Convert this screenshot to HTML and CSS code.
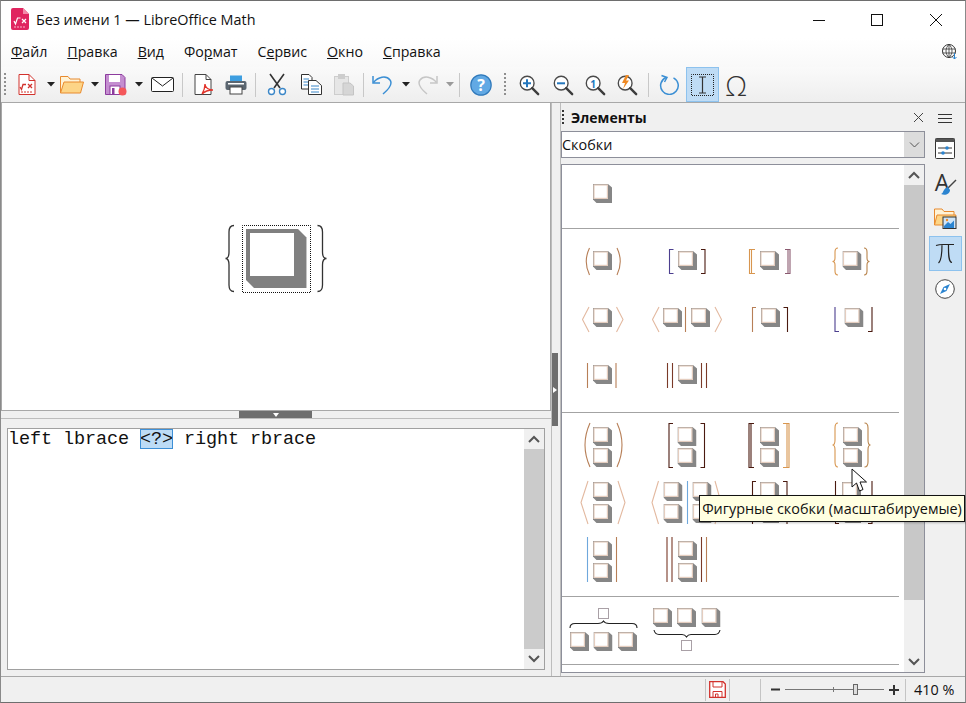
FILE: index.html
```html
<!DOCTYPE html>
<html lang="ru">
<head>
<meta charset="utf-8">
<title>Без имени 1 — LibreOffice Math</title>
<link rel="stylesheet" href="styles.css">
</head>
<body>
<svg class="defs" width="0" height="0" aria-hidden="true">
  <symbol id="b" viewBox="0 0 19 19">
    <polygon points="0,0 15,0 19,3.5 19,19 3.5,19 0,15.5" fill="#868686"/>
    <rect x="1" y="1" width="13.4" height="13.4" fill="#fff" stroke="#e4cdbf" stroke-width="1.2"/>
  </symbol>
  <symbol id="bs" viewBox="0 0 11 11">
    <rect x=".5" y=".5" width="10" height="10" fill="#fff" stroke="#a9a0a6"/>
  </symbol>
  <symbol id="dd" viewBox="0 0 8 5"><polygon points="0,0 8,0 4,4.5" fill="#222"/></symbol>
  <symbol id="ddg" viewBox="0 0 8 5"><polygon points="0,0 8,0 4,4.5" fill="#9a9a9a"/></symbol>
  <symbol id="mag" viewBox="0 0 24 24">
    <circle cx="10" cy="10" r="7.5" fill="#fff" stroke="#4a4a4a" stroke-width="1.5"/>
    <path d="M15.5 15.5L22 22" stroke="#3c3c3c" stroke-width="2.6" stroke-linecap="round"/>
  </symbol>
</svg>
<div class="window">
  <header class="titlebar">
    <svg class="app-icon" width="18" height="22" viewBox="0 0 18 22"><path d="M2 0H12L18 6V20a2 2 0 0 1-2 2H2a2 2 0 0 1-2-2V2a2 2 0 0 1 2-2z" fill="#e0255f"/><path d="M12 0L18 6H12z" fill="#f38aa8"/><path d="M3 13l1.5 3 2-6h3M11 11l4 4M15 11l-4 4" fill="none" stroke="#fff" stroke-width="1.2"/><path d="M3 19h12" stroke="#f7b5c8" stroke-dasharray="2 1"/></svg>
    <span class="title-text">Без имени 1 — LibreOffice Math</span>
    <div class="win-btns">
      <span class="win-btn"><svg width="12" height="12" viewBox="0 0 12 12"><path d="M0 6.5H12" stroke="#111"/></svg></span>
      <span class="win-btn"><svg width="12" height="12" viewBox="0 0 12 12"><rect x=".5" y=".5" width="11" height="11" fill="none" stroke="#111"/></svg></span>
      <span class="win-btn"><svg width="12" height="12" viewBox="0 0 12 12"><path d="M0 0L12 12M12 0L0 12" stroke="#111"/></svg></span>
    </div>
  </header>
  <nav class="menubar">
    <span><u>Ф</u>айл</span><span><u>П</u>равка</span><span><u>В</u>ид</span><span>Фо<u>р</u>мат</span><span>С<u>е</u>рвис</span><span><u>О</u>кно</span><span><u>С</u>правка</span>
    <svg class="globe" width="17" height="17" viewBox="0 0 17 17"><circle cx="8" cy="8" r="6.5" fill="#fff" stroke="#333"/><path d="M1.5 6H14.5M1.5 10H14.5M8 1.5V14.5M8 1.5C4 5 4 11 8 14.5M8 1.5C12 5 12 11 8 14.5" fill="none" stroke="#333" stroke-width=".8"/><path d="M13.5 10V16M11.5 14l2 2 2-2" fill="none" stroke="#2b84d0"/></svg>
  </nav>
  <div class="toolbar">
    <span class="tb w6"><i class="grip"></i></span>
    <span class="tb w38"><svg width="18" height="21" viewBox="0 0 18 21"><path d="M1 .5H11L17 6.5V20.5H1z" fill="#fff" stroke="#d2322d"/><path d="M11 .5V6.5H17" fill="none" stroke="#d2322d"/><path d="M2 13l1.5 2.5 1.5-5H8M10 10l4 4M14 10l-4 4" fill="none" stroke="#d2322d" stroke-width="1.3"/><path d="M3 18H15" stroke="#d2322d" stroke-dasharray="2 1"/></svg></span>
    <span class="tb w10"><svg width="8" height="5"><use href="#dd" width="8" height="5"/></svg></span>
    <span class="tb w32"><svg width="24" height="19" viewBox="0 0 24 19"><path d="M.5 18V1.5H8L10 4H20V7" fill="#fff3d6" stroke="#e88a2e"/><path d="M.5 18L4 7H23.5L20.5 18z" fill="#fdd587" stroke="#e88a2e"/></svg></span>
    <span class="tb w14"><svg width="8" height="5"><use href="#dd" width="8" height="5"/></svg></span>
    <span class="tb w28"><svg width="22" height="22" viewBox="0 0 22 22"><path d="M.5.5H17L20 3.5V20.5H.5z" fill="#c48ed0" stroke="#8d3c9e"/><rect x="4" y="1" width="11" height="7" fill="#fff"/><rect x="5" y="12" width="10" height="8.5" fill="#fff" stroke="#8d3c9e"/><rect x="7" y="14" width="2.5" height="6" fill="#8d3c9e"/><circle cx="17.5" cy="17.5" r="4" fill="#f4575a"/></svg></span>
    <span class="tb w18"><svg width="8" height="5"><use href="#dd" width="8" height="5"/></svg></span>
    <span class="tb w28"><svg width="23" height="15" viewBox="0 0 23 15"><rect x=".5" y=".5" width="22" height="14" rx="1" fill="#fff" stroke="#222"/><path d="M1 1L11.5 9 22 1" fill="none" stroke="#222"/></svg></span>
    <span class="tb w12"><i class="sep"></i></span>
    <span class="tb w32"><svg width="20" height="21" viewBox="0 0 20 21"><path d="M1 .5H12L17 5.5V20.5H1z" fill="#fff" stroke="#444"/><path d="M12 .5V5.5H17" fill="none" stroke="#444"/><path d="M8 20C11 15 11 10 11 10C11 14 15 16 19 16C15 16 11 17 8 20z" fill="none" stroke="#e2342b" stroke-width="1.3"/></svg></span>
    <span class="tb w32"><svg width="22" height="20" viewBox="0 0 22 20"><rect x="5" y=".5" width="12" height="7" fill="#3d9ee0"/><rect x=".5" y="6" width="21" height="9" rx="2" fill="#5b6670"/><rect x="5" y="12" width="12" height="7" fill="#fff" stroke="#444"/><rect x="3" y="8" width="16" height="1.5" fill="#fff"/></svg></span>
    <span class="tb w6"><i class="sep"></i></span>
    <span class="tb w38"><svg width="20" height="23" viewBox="0 0 20 23"><path d="M3 1L13 15M17 1L7 15" stroke="#333" stroke-width="1.6" fill="none"/><circle cx="4.5" cy="18.5" r="3" fill="#fff" stroke="#3b87c8" stroke-width="1.4"/><circle cx="15.5" cy="18.5" r="3" fill="#fff" stroke="#3b87c8" stroke-width="1.4"/></svg></span>
    <span class="tb w30"><svg width="21" height="21" viewBox="0 0 21 21"><path d="M.5.5H8L11 3.5V15H.5z" fill="#fff" stroke="#333"/><path d="M2.5 5H8M2.5 8H8M2.5 11H8" stroke="#3b87c8"/><path d="M7.5 6.5H15L20.5 11.500V20.500H7.500z" fill="#fff" stroke="#333"/><path d="M10 12H18M10 15H18M10 18H18" stroke="#3b87c8"/></svg></span>
    <span class="tb w36"><svg width="20" height="23" viewBox="0 0 20 23"><rect x=".5" y="3.500" width="14" height="18" fill="#e6e6e6" stroke="#cdcdcd"/><rect x="4" y="1" width="7" height="5" fill="#cdcdcd"/><path d="M9 10H16L19.500 13V22H9z" fill="#d6d6d6" stroke="#c4c4c4"/></svg></span>
    <span class="tb w2"><i class="sep"></i></span>
    <span class="tb w36"><svg width="21" height="21" viewBox="0 0 21 21"><path d="M1 2V9H8" fill="none" stroke="#3b8fd4" stroke-width="1.5"/><path d="M1.500 8.500C6 3 14 1 18 6C21 10 17 15 11 20" fill="none" stroke="#3b8fd4" stroke-width="1.5"/></svg></span>
    <span class="tb w12"><svg width="8" height="5"><use href="#dd" width="8" height="5"/></svg></span>
    <span class="tb w30"><svg width="21" height="21" viewBox="0 0 21 21"><path d="M20 2V9H13" fill="none" stroke="#c6c6c6" stroke-width="1.500"/><path d="M19.500 8.500C15 3 7 1 3 6C0 10 4 15 10 20" fill="none" stroke="#c6c6c6" stroke-width="1.500"/></svg></span>
    <span class="tb w16"><svg width="8" height="5"><use href="#ddg" width="8" height="5"/></svg></span>
    <span class="tb w3"><i class="sep"></i></span>
    <span class="tb w40"><svg width="22" height="22" viewBox="0 0 22 22"><circle cx="11" cy="11" r="10.200" fill="#62a9e4" stroke="#2f79bb" stroke-width="1.200"/><text x="11" y="17" class="help-q">?</text></svg></span>
    <span class="tb w8"><i class="grip"></i></span>
    <span class="tb w40"><svg width="22" height="22"><use href="#mag" width="22" height="22"/><path d="M5 9.300H13M9 5.300V13.300" stroke="#2577bd" stroke-width="2"/></svg></span>
    <span class="tb w28"><svg width="22" height="22"><use href="#mag" width="22" height="22"/><path d="M5 9.300H13" stroke="#2577bd" stroke-width="2"/></svg></span>
    <span class="tb w36"><svg width="22" height="22"><use href="#mag" width="22" height="22"/><text x="9.200" y="13.500" class="mag-one">1</text></svg></span>
    <span class="tb w28"><svg width="22" height="22"><use href="#mag" width="22" height="22"/><path d="M10 1L6 9H9L7 15L13 6.500H10L13 1z" fill="#f08a24"/></svg></span>
    <span class="tb w14"><i class="sep"></i></span>
    <span class="tb w28"><svg width="20" height="21" viewBox="0 0 20 21"><path d="M7 3.500A8.800 8.800 0 1 0 14.500 3.800" fill="none" stroke="#3b8fd4" stroke-width="1.500"/><path d="M2.500 1.500L8 3.500 5.500 8" fill="none" stroke="#3b8fd4" stroke-width="1.500"/></svg></span>
    <span class="tb w3"></span>
    <span class="tb w33 active"><svg width="23" height="22" viewBox="0 0 23 22"><rect x=".5" y=".5" width="22" height="21" fill="none" stroke="#222" stroke-dasharray="1 1" stroke-dashoffset=".5"/><path d="M8 3H15M8 19H15M11.500 3V19" stroke="#333" stroke-width="1.200" fill="none"/></svg></span>
    <span class="tb w34 omega">Ω</span>
  </div>
  <main class="main">
    <section class="docs">
      <div class="preview">
        <svg width="110" height="76" viewBox="220 220 110 76">
          <rect x="242.500" y="225.500" width="68" height="67" fill="none" stroke="#111" stroke-dasharray="1 1" stroke-dashoffset=".5"/>
          <polygon points="246,229 298,229 306,237 306,288 254,288 246,280" fill="#808080"/>
          <rect x="250" y="233" width="44" height="43" fill="#fff"/>
          <path d="M306.500 237V288" stroke="#c4c4c4"/>
          <path d="M234 225.500Q229 225.500 229 232V252Q229 258.500 225.500 258.500Q229 258.500 229 265V285Q229 291.500 234 291.500" fill="none" stroke="#333" stroke-width="1.300"/>
          <path d="M317.500 225.500Q322.500 225.500 322.500 232V252Q322.500 258.500 326.500 258.500Q322.500 258.500 322.500 265V285Q322.500 291.500 317.500 291.500" fill="none" stroke="#333" stroke-width="1.300"/>
        </svg>
      </div>
      <div class="hsplit"><span class="hhandle"><i class="tri-down"></i></span></div>
      <div class="editor-wrap">
        <div class="editor">
          <div class="code">left lbrace <span class="ph">&lt;?&gt;</span> right rbrace</div>
          <div class="vscroll">
            <span class="arrow"><svg width="12" height="8" viewBox="0 0 12 8"><path d="M1 7L6 2L11 7" fill="none" stroke="#555" stroke-width="2"/></svg></span>
            <span class="thumb"></span>
            <span class="arrow"><svg width="12" height="8" viewBox="0 0 12 8"><path d="M1 1L6 6L11 1" fill="none" stroke="#555" stroke-width="2"/></svg></span>
          </div>
        </div>
      </div>
    </section>
    <div class="vsplit"><span class="vhandle"><i class="tri-right"></i></span></div>
    <aside class="deck">
      <div class="deck-title">
        <i class="dots"></i><strong>Элементы</strong>
        <svg class="deck-close" width="9" height="9" viewBox="0 0 9 9"><path d="M0 0L9 9M9 0L0 9" stroke="#444"/></svg>
      </div>
      <div class="combo"><span class="combo-text">Скобки</span><span class="combo-btn"><svg width="11" height="6" viewBox="0 0 11 6"><path d="M1 .5L5.500 5L10 .5" fill="none" stroke="#555"/></svg></span></div>
      <div class="panel">
        <div class="symbols">
          <div class="sec sec-a">
            <div class="rows">
              <svg class="c" viewBox="0 0 82 57"><use href="#b" x="31" y="19" width="19" height="19"/></svg>
            </div>
          </div>
          <div class="sec sec-b">
            <div class="rows">
              <svg class="c" viewBox="0 0 82 57"><path class="s1" d="M27.500 15Q21 28.500 27.500 42"/><path class="s1" d="M55 15Q61.500 28.500 55 42"/><use href="#b" x="31" y="18" width="19" height="19"/></svg>
              <svg class="c" viewBox="0 0 82 57"><path class="s3" d="M28.500 16.500H24.500V40.500H28.500"/><path class="s2" d="M56 16.500H60V40.500H56"/><use href="#b" x="33" y="18" width="19" height="19"/></svg>
              <svg class="c" viewBox="0 0 82 57"><path class="s4" d="M28 16.500H22.500V40.500H28M24.500 16.500V40.500"/><path class="s7" d="M58 16.500H63V40.500H58M61 16.500V40.500"/><use href="#b" x="33" y="18" width="19" height="19"/></svg>
              <svg class="c" viewBox="0 0 82 57"><path class="s4" d="M28 15Q25 15 25 19V25Q25 28.500 22.500 28.500Q25 28.500 25 32V38Q25 42 28 42"/><path class="s8" d="M54 15Q57 15 57 19V25Q57 28.500 59.500 28.500Q57 28.500 57 32V38Q57 42 54 42"/><use href="#b" x="32.500" y="18" width="19" height="19"/></svg>

              <svg class="c" viewBox="0 0 82 57"><path class="s6" d="M27 17L20.500 29.500L27 42M54.500 17L61 29.500L54.500 42"/><use href="#b" x="31" y="18" width="19" height="19"/></svg>
              <svg class="c" viewBox="0 0 82 57"><path class="s6" d="M14 17L7.500 29.500L14 42M70 17L76.500 29.500L70 42"/><path class="s1" d="M40.500 17V42"/><use href="#b" x="18" y="18" width="19" height="19"/><use href="#b" x="46" y="18" width="19" height="19"/></svg>
              <svg class="c" viewBox="0 0 82 57"><path class="s1" d="M29 17.500H25.500V42"/><path class="s2" d="M56.500 17.500H60.500V42"/><use href="#b" x="34" y="18" width="19" height="19"/></svg>
              <svg class="c" viewBox="0 0 82 57"><path class="s3" d="M25 17V41.500H29"/><path class="s2" d="M62 17V41.500H58"/><use href="#b" x="34.500" y="18" width="19" height="19"/></svg>

              <svg class="c" viewBox="0 0 82 57"><path class="s1" d="M25.500 16V41M54 16V41"/><use href="#b" x="31" y="18" width="19" height="19"/></svg>
              <svg class="c" viewBox="0 0 82 57"><path class="s2a" d="M22.500 16V41M27.500 16V41M56.500 16V41M61.500 16V41"/><use href="#b" x="33" y="18" width="19" height="19"/></svg>
            </div>
          </div>
          <div class="sec sec-c">
            <div class="rows">
              <svg class="c" viewBox="0 0 82 57"><path class="s1" d="M28 7Q18 29 28 51M55 7Q65 29 55 51"/><use href="#b" x="31" y="11" width="19" height="19"/><use href="#b" x="31" y="32" width="19" height="19"/></svg>
              <svg class="c" viewBox="0 0 82 57"><path class="s2" d="M28 7.500H24V51.500H28M55.500 7.500H59.500V51.500H55.500"/><use href="#b" x="32.500" y="11" width="19" height="19"/><use href="#b" x="32.500" y="32" width="19" height="19"/></svg>
              <svg class="c" viewBox="0 0 82 57"><path class="s2" d="M27 7.500H22V51.500H27M24 7.500V51.500"/><path class="s4" d="M56 7.500H62V51.500H56M60 7.500V51.500"/><use href="#b" x="33" y="11" width="19" height="19"/><use href="#b" x="33" y="32" width="19" height="19"/></svg>
              <svg class="c" viewBox="0 0 82 57"><path class="s4" d="M28 7Q25 7 25 12V24Q25 29 22.500 29Q25 29 25 34V46Q25 51 28 51"/><path class="s8" d="M54.500 7Q58 7 58 12V24Q58 29 60.500 29Q58 29 58 34V46Q58 51 54.500 51"/><use href="#b" x="33" y="11" width="19" height="19"/><use href="#b" x="33" y="32" width="19" height="19"/></svg>

              <svg class="c" viewBox="0 0 82 57"><path class="s6" d="M26 8L19 29.500L26 51M56 8L63 29.500L56 51"/><use href="#b" x="31" y="9" width="19" height="19"/><use href="#b" x="31" y="31" width="19" height="19"/></svg>
              <svg class="c" viewBox="0 0 82 57"><path class="s6" d="M13.500 8L7 29.500L13.500 51M70 8L76 29.500L70 51"/><path class="s5" d="M42.500 8V51"/><use href="#b" x="18.500" y="9" width="19" height="19"/><use href="#b" x="18.500" y="31" width="19" height="19"/><use href="#b" x="47.500" y="9" width="19" height="19"/><use href="#b" x="47.500" y="31" width="19" height="19"/></svg>
              <svg class="c" viewBox="0 0 82 57"><path class="s2" d="M29 8.500H25.500V51M56 8.500H60V51"/><use href="#b" x="33" y="9" width="19" height="19"/><use href="#b" x="33" y="31" width="19" height="19"/></svg>
              <svg class="c" viewBox="0 0 82 57"><path class="s2" d="M25.500 8V50.500H29M62 8V50.500H58"/><use href="#b" x="32" y="9" width="19" height="19"/><use href="#b" x="32" y="31" width="19" height="19"/></svg>

              <svg class="c" viewBox="0 0 82 57"><path class="s5" d="M25.500 7V52"/><path class="s1" d="M54.500 7V52"/><use href="#b" x="31" y="11" width="19" height="19"/><use href="#b" x="31" y="33" width="19" height="19"/></svg>
              <svg class="c" viewBox="0 0 82 57"><path class="s2a" d="M22 7V52M27 7V52M56.500 7V52"/><path class="s1" d="M61.500 7V52"/><use href="#b" x="33" y="11" width="19" height="19"/><use href="#b" x="33" y="33" width="19" height="19"/></svg>
            </div>
          </div>
          <div class="sec sec-d">
            <div class="rows">
              <svg class="c tall" viewBox="0 0 82 67"><use href="#bs" x="36" y="11" width="11" height="11"/><path class="s9" d="M8 31Q8 26.500 13 26.500H36Q40 26.500 41.500 24Q43 26.500 47 26.500H70Q75 26.500 75 31"/><use href="#b" x="8" y="35" width="19" height="19"/><use href="#b" x="31.500" y="35" width="19" height="19"/><use href="#b" x="56" y="35" width="19" height="19"/></svg>
              <svg class="c tall" viewBox="0 0 82 67"><use href="#b" x="8" y="11" width="19" height="19"/><use href="#b" x="32" y="11" width="19" height="19"/><use href="#b" x="56.500" y="11" width="19" height="19"/><path class="s9" d="M9 33Q10 37.500 14 37.500H37Q40 37.500 41.500 40Q43 37.500 46 37.500H70Q74 37.500 75 33"/><use href="#bs" x="36" y="43" width="11" height="11"/></svg>
            </div>
          </div>
          <div class="sec-e"></div>
        </div>
        <div class="vscroll panel-scroll">
          <span class="arrow"><svg width="12" height="8" viewBox="0 0 12 8"><path d="M1 7L6 2L11 7" fill="none" stroke="#555" stroke-width="2"/></svg></span>
          <span class="thumb"></span>
          <span class="arrow"><svg width="12" height="8" viewBox="0 0 12 8"><path d="M1 1L6 6L11 1" fill="none" stroke="#555" stroke-width="2"/></svg></span>
        </div>
      </div>
    </aside>
    <div class="tabbar">
      <svg class="tab" width="16" height="9" viewBox="0 0 16 9"><path d="M1 .5H15M1 4.500H15M1 8.500H15" stroke="#333"/></svg>
      <span class="tab-i"><svg width="20" height="21" viewBox="0 0 20 21"><rect x=".5" y=".5" width="19" height="20" rx="1" fill="#fff" stroke="#333"/><rect x=".5" y=".5" width="19" height="3.500" fill="#555"/><path d="M3 10H17M3 15H17" stroke="#333"/><circle cx="12" cy="10" r="1.800" fill="#2b84d0"/><circle cx="8" cy="15" r="1.800" fill="#2b84d0"/></svg></span>
      <span class="tab-i"><span class="tab-a">A</span><svg class="brush" width="17" height="17" viewBox="0 0 17 17"><path d="M16 1L8 9" stroke="#444" stroke-width="1.500"/><path d="M8 8C3 9 4 14 1 15C5 17 10 15 10 11z" fill="#2b84d0"/></svg></span>
      <span class="tab-i"><svg width="23" height="21" viewBox="0 0 23 21"><path d="M.5 17V1H8L10 3.500H20V8" fill="#fff3d6" stroke="#e88a2e"/><path d="M.5 17L3 7H22L20 17z" fill="#fdd587" stroke="#e88a2e"/><rect x="9" y="9" width="13" height="11.500" fill="#cfe4f7" stroke="#333"/><path d="M10 18L14 14L16.500 16L20 12.500V20H10z" fill="#2b84d0"/><circle cx="13" cy="12" r="1.200" fill="#f08a24"/></svg></span>
      <span class="tab-i tab-on"><svg width="20" height="21" viewBox="0 0 20 21"><path d="M1 2.500C4 1.500 5 1.500 8 1.500H19M7 1.500C7 9 7 17 3.500 20M13.500 1.500C13.500 9 13 19 17 19.500" fill="none" stroke="#222" stroke-width="1.200"/></svg></span>
      <span class="tab-i"><svg width="20" height="20" viewBox="0 0 20 20"><circle cx="10" cy="10" r="9.300" fill="#fff" stroke="#444"/><path d="M15 5L11.500 12 5 15 8.500 8z" fill="#2b84d0"/><circle cx="10" cy="10" r="1.300" fill="#fff"/></svg></span>
    </div>
  </main>
  <footer class="statusbar">
    <span class="st-save"><svg width="17" height="17" viewBox="0 0 17 17"><path d="M.7.7H14L16.300 3V16.300H.7z" fill="#fff" stroke="#d2322d" stroke-width="1.300"/><path d="M4 1V6H13V1M4 16V10.500H13V16M6.500 16V13H9V16" fill="none" stroke="#d2322d"/></svg></span>
    <span class="st-gap"></span>
    <span class="st-zoom">
      <svg width="9" height="3" viewBox="0 0 9 3"><path d="M0 1.500H9" stroke="#333" stroke-width="2"/></svg>
      <span class="slider"><i class="tick"></i><i class="knob"></i></span>
      <svg width="10" height="10" viewBox="0 0 10 10"><path d="M0 5H10M5 0V10" stroke="#333" stroke-width="2"/></svg>
    </span>
    <span class="st-pct">410 %</span>
  </footer>
  <div class="tooltip">Фигурные скобки (масштабируемые)</div>
  <svg class="cursor" width="17" height="25" viewBox="0 0 17 25"><path d="M1 1V19L5.500 15L8.500 23L12 21.500L9 14H15.500z" fill="#fff" stroke="#111" stroke-linejoin="round"/></svg>
</div>
</body>
</html>
```
FILE: styles.css
```css
* { box-sizing: border-box; }
html, body { margin: 0; padding: 0; }
body { width: 966px; height: 703px; overflow: hidden; font-family: "Open Sans", "Noto Sans", sans-serif; color: #111; background: #f0f0f0; }
.defs { position: absolute; }
.window { position: relative; width: 966px; height: 703px; display: flex; flex-direction: column; border-top: 1px solid #6e6e6e; border-left: 1px solid #8a8a8a; border-right: 1px solid #8a8a8a; border-bottom: 1px solid #6e6e6e; background: #f0f0f0; }

.titlebar { height: 37px; flex: none; display: flex; align-items: center; background: #fff; padding-left: 10px; }
.app-icon { flex: none; margin-top: -1px; }
.title-text { margin-left: 7px; font-size: 14.4px; }
.win-btns { margin-left: auto; display: flex; }
.win-btn { width: 58.5px; height: 37px; display: flex; align-items: center; justify-content: center; }

.menubar { height: 29px; flex: none; display: flex; align-items: center; gap: 20px; padding-left: 10px; padding-right: 7px; padding-bottom: 2px; font-size: 14.2px; background: linear-gradient(#fff, #f9f9f9); }
.menubar .globe { margin-left: auto; }

.toolbar { height: 36px; flex: none; display: flex; align-items: stretch; padding-left: 1px; background: linear-gradient(#fafafa, #eeeeee); border-bottom: 1px solid #a8a8a8; }
.tb { flex: none; display: flex; align-items: center; justify-content: center; }
.w2 { width: 2px; } .w3 { width: 3px; } .w6 { width: 6px; } .w8 { width: 8px; } .w10 { width: 10px; } .w12 { width: 12px; } .w14 { width: 14px; } .w16 { width: 16px; } .w18 { width: 18px; } .w28 { width: 28px; } .w30 { width: 30px; } .w32 { width: 32px; } .w33 { width: 33px; } .w34 { width: 34px; } .w36 { width: 36px; } .w38 { width: 38px; } .w40 { width: 40px; }
.grip { display: block; width: 2px; height: 24px; background: repeating-linear-gradient(#8f8f8f 0 2px, transparent 2px 4px); }
.sep { display: block; width: 1px; height: 24px; background: #c8c8c8; flex: none; }
.active { background: #bfdcf5; border: 1px solid #8dc2ee; }
.omega { font: 300 28px "Open Sans", sans-serif; color: #333; }
.help-q { font: bold 16px "Open Sans", sans-serif; fill: #fff; text-anchor: middle; }
.mag-one { font: bold 10px "Open Sans", sans-serif; fill: #2577bd; text-anchor: middle; }

.main { flex: 1; min-height: 0; display: flex; }
.docs { width: 550px; flex: none; display: flex; flex-direction: column; }
.preview { height: 308px; flex: none; background: #fff; border: 1px solid #a8a8a8; border-top: 0; display: flex; align-items: center; justify-content: center; padding-right: 2px; padding-top: 3px; }
.hsplit { height: 8px; flex: none; display: flex; justify-content: center; background: #f0f0f0; border-bottom: 1px solid #bdbdbd; padding-right: 1px; }
.hhandle { width: 73px; height: 7px; background: #6e6e6e; display: flex; align-items: center; justify-content: center; }
.tri-down { display: block; border-left: 3.5px solid transparent; border-right: 3.5px solid transparent; border-top: 4px solid #fff; }
.editor-wrap { flex: 1; padding: 9px 6px 5px 6px; min-height: 0; }
.editor { height: 242px; display: flex; background: #fff; border: 1px solid #a0a0a0; }
.code { flex: 1; font: 18.5px/20px "Liberation Mono", monospace; letter-spacing: -.1px; white-space: pre; color: #111; }
.ph { display: inline-block; background: #bddcf6; outline: 1px solid #3d8fd6; outline-offset: -1px; height: 20px; padding-top: 1px; }
.vscroll { width: 20px; flex: none; display: flex; flex-direction: column; background: #f0f0f0; }
.vscroll .arrow { height: 20px; flex: none; display: flex; align-items: center; justify-content: center; }
.vscroll .thumb { flex: 1; background: #cbcbcb; }

.vsplit { width: 10px; flex: none; display: flex; justify-content: flex-start; border-left: 1px solid #bdbdbd; border-right: 1px solid #bdbdbd; padding-top: 250px; }
.vhandle { width: 6px; height: 73px; background: #6e6e6e; display: flex; align-items: center; justify-content: center; }
.tri-right { display: block; border-top: 3.5px solid transparent; border-bottom: 3.5px solid transparent; border-left: 4px solid #fff; }

.deck { width: 365px; flex: none; display: flex; flex-direction: column; }
.deck-title { height: 28px; flex: none; display: flex; align-items: center; font-size: 14px; padding-left: 1px; }
.deck-title strong { margin-left: 7px; font-weight: 700; }
.dots { display: block; width: 2px; height: 14px; background: repeating-linear-gradient(#333 0 2px, transparent 2px 4px); }
.deck-close { margin-left: auto; margin-right: 3px; }
.combo { height: 27px; flex: none; display: flex; background: #fff; border: 1px solid #8d8f9a; margin-right: 1px; }
.combo-text { flex: 1; font-size: 14.4px; line-height: 25px; }
.combo-btn { width: 20px; background: #dcdcdc; display: flex; align-items: center; justify-content: center; }
.panel { height: 509px; flex: none; margin-top: 6px; margin-right: 1px; display: flex; background: #fff; border: 1px solid #8d8f9a; overflow: hidden; }
.symbols { flex: 1; min-width: 0; padding-right: 5px; }
.sec { border-bottom: 1px solid #a3a3a3; }
.rows { display: grid; grid-template-columns: repeat(4, 82.5px); }
.c { display: block; width: 82px; height: 57px; }
.c.tall { height: 67px; }
.c path { fill: none; stroke-width: 1.1; }
.sec-a { height: 64px; }
.sec-b { height: 184px; padding-top: 4px; }
.sec-c { height: 184px; padding-top: 3px; }
.sec-d { height: 68px; }
.s1 { stroke: #b77f57; }
.s2 { stroke: #4a1a10; }
.s2a { stroke: #7a3a28; }
.s3 { stroke: #4c3f8f; }
.s4 { stroke: #d8964f; }
.s5 { stroke: #6fa8dc; }
.s6 { stroke: #e3b9a0; }
.s7 { stroke: #8a5a70; }
.s8 { stroke: #b8844c; }
.s9 { stroke: #222; }
.panel-scroll { background: #f0f0f0; }
.panel-scroll .thumb { background: #c8c8c8; margin-bottom: 52px; }

.tabbar { flex: 1; display: flex; flex-direction: column; align-items: center; padding-top: 11px; padding-right: 1px; }
.tab { flex: none; margin-bottom: 8px; }
.tab-i { position: relative; width: 33px; height: 35px; flex: none; display: flex; align-items: center; justify-content: center; }
.tab-on { background: #bfdcf5; border: 1px solid #8dc2ee; }
.tab-a { font: 23px "Open Sans", sans-serif; color: #333; margin-left: -6px; margin-top: -4px; }
.brush { position: absolute; right: 5px; bottom: 5px; }

.statusbar { height: 26px; flex: none; display: flex; align-items: center; justify-content: flex-end; border-top: 1px solid #a8a8a8; background: #f0f0f0; font-size: 14.4px; }
.st-save { width: 25px; height: 22px; display: flex; align-items: center; justify-content: center; border-left: 1px solid #c4c4c4; border-right: 1px solid #c4c4c4; }
.st-gap { width: 31px; height: 22px; border-right: 1px solid #c4c4c4; }
.st-zoom { width: 145px; height: 22px; display: flex; align-items: center; justify-content: center; gap: 5px; border-right: 1px solid #c4c4c4; padding-left: 4px; }
.slider { position: relative; width: 99px; height: 1px; background: #777; }
.tick { position: absolute; left: 48px; top: -2px; width: 1px; height: 5px; background: #777; }
.knob { position: absolute; left: 68px; top: -5px; width: 5px; height: 11px; background: #ddd; border: 1px solid #666; }
.st-pct { width: 59px; padding-left: 8px; }

.tooltip { position: absolute; left: 698px; top: 494px; width: 266px; height: 27px; display: flex; align-items: center; justify-content: center; background: #ffffe1; border: 1px solid #111; font-size: 14.4px; white-space: nowrap; box-shadow: 1px 1px 2px rgba(0,0,0,.25); }
.cursor { position: absolute; left: 850px; top: 467px; }
```
